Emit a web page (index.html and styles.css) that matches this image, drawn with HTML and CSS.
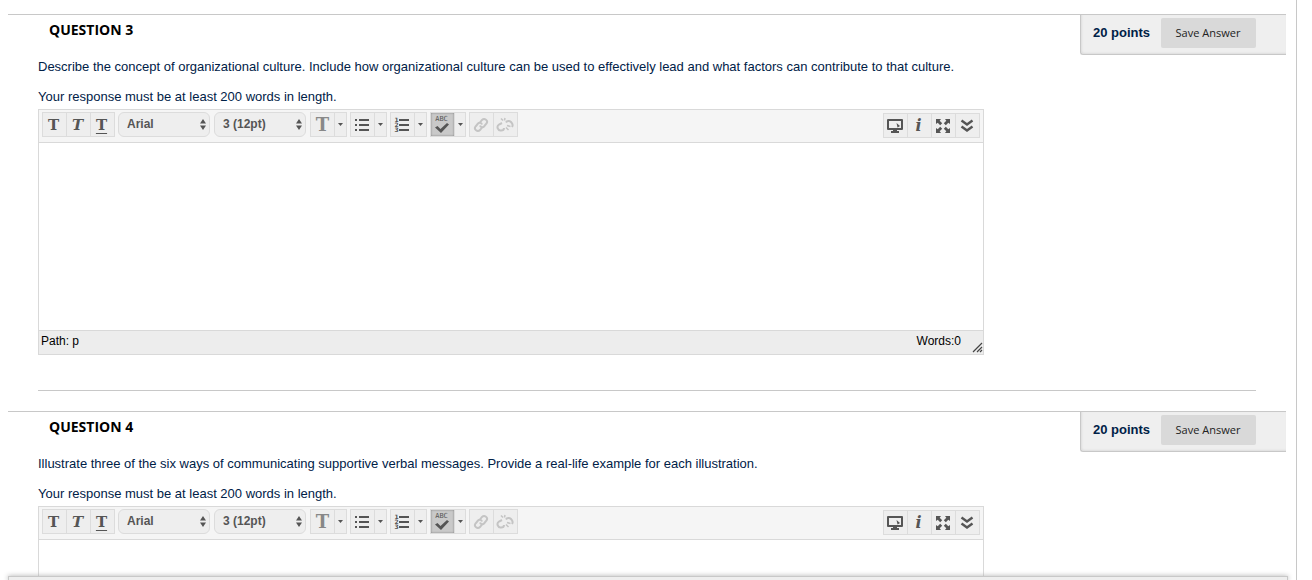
FILE: index.html
```
<!DOCTYPE html>
<html lang="en">
<head>
<meta charset="utf-8">
<title>Take Test</title>
<link rel="stylesheet" href="styles.css">
</head>
<body>
<svg class="defs" aria-hidden="true">
  <symbol id="bullets" viewBox="0 0 16 16"><path d="M1 2h2v2H1zM1 7h2v2H1zM1 12h2v2H1zM5 2h10v2H5zM5 7h10v2H5zM5 12h10v2H5z"/></symbol>
  <symbol id="lines" viewBox="0 0 10 16"><path d="M0 2h10v2H0zM0 7h10v2H0zM0 12h10v2H0z"/></symbol>
  <symbol id="check" viewBox="0 0 16 10"><path d="M1 4.500l2.500-1.500 3 3L13 0l2 1.500L7 10z"/></symbol>
  <symbol id="caret" viewBox="0 0 5 3"><path d="M0 0h5L2.500 3z"/></symbol>
  <symbol id="updown" viewBox="0 0 6 11"><path d="M0 4.500L3 0l3 4.500zM0 6.500h6L3 11z"/></symbol>
  <symbol id="link" viewBox="0 0 16 16"><g fill="none" stroke="currentColor" stroke-width="2"><path d="M7 5.500l2-2.500c2.500-2.500 6.500 .5 4.500 3.500L11 9.500C9.500 11 7.500 10 7 8.500"/><path d="M9 10.500l-2 2.500c-2.500 2.500-6.500-.5-4.500-3.500L5 6.500C6.500 5 8.500 6 9 7.500"/></g></symbol>
  <symbol id="unlink" viewBox="0 0 18 16"><g fill="none" stroke="currentColor" stroke-width="2"><path d="M10 5.500c1-2 3.500-2 5-.5 1.500 1.500 2 3.500 1 5"/><path d="M6 6L3 7.500C0 9.500 2 14 5 13.500c2 0 3-1 3-2.500"/><path d="M5 1.500l2 2M9 1l-.500 2.500M11 8.500l3.500 1M10 10.500l2.500 2.500" stroke-width="1.500"/></g></symbol>
  <symbol id="screen" viewBox="0 0 16 16"><path fill-rule="evenodd" d="M1 1h14q1 0 1 1v9q0 1-1 1H1q-1 0-1-1V2q0-1 1-1zM2 3v7h12V3zM6 12h4v1h2v2H4v-2h2z"/><path d="M9.500 5l3.500 3-1.500 1-1 .5z"/></symbol>
  <symbol id="expand" viewBox="0 0 16 16"><path d="M1 1h5L4.700 2.700l2.500 2.500-2 2-2.500-2.500L1 6zM15 1v5l-1.700-1.300-2.500 2.500-2-2 2.500-2.500L10 1zM1 15v-5l1.700 1.300 2.500-2.500 2 2-2.500 2.500L6 15zM15 15h-5l1.300-1.700-2.500-2.500 2-2 2.500 2.500L15 10z"/></symbol>
  <symbol id="chevrons" viewBox="0 0 14 14"><path fill="none" stroke="currentColor" stroke-width="2.400" d="M1.500 1.500L7 5.500l5.500-4M1.500 7.500L7 11.500l5.500-4"/></symbol>
  <symbol id="grip" viewBox="0 0 12 12"><path fill="none" stroke="currentColor" stroke-width="1.200" d="M2 11l9-9M6 11l5-5M9 11l2-2"/></symbol>
</svg>

<main class="page">
  <section class="question">
    <header class="question-head">
      <h2 class="question-title">QUESTION 3</h2>
      <div class="points-box">
        <span class="points">20 points</span>
        <button class="save" type="button">Save Answer</button>
      </div>
    </header>
    <div class="question-body">
      <p class="prompt">Describe the concept of organizational culture. Include how organizational culture can be used to effectively lead and what factors can contribute to that culture.</p>
      <p class="prompt">Your response must be at least 200 words in length.</p>
      <div class="editor">
        <div class="toolbar">
          <div class="group">
            <button class="tool slab" type="button" aria-label="Bold">T</button>
            <button class="tool slab italic" type="button" aria-label="Italic">T</button>
            <button class="tool slab underline" type="button" aria-label="Underline">T</button>
          </div>
          <div class="picker"><select aria-label="Font family"><option>Arial</option></select><svg class="updown"><use href="#updown"/></svg></div>
          <div class="picker"><select aria-label="Font size"><option>3 (12pt)</option></select><svg class="updown"><use href="#updown"/></svg></div>
          <div class="group split">
            <button class="tool slab large" type="button" aria-label="Text color">T</button>
            <button class="drop" type="button" aria-label="More text colors"><svg class="caret"><use href="#caret"/></svg></button>
          </div>
          <div class="group split">
            <button class="tool" type="button" aria-label="Bullet list"><svg class="icon"><use href="#bullets"/></svg></button>
            <button class="drop" type="button" aria-label="Bullet styles"><svg class="caret"><use href="#caret"/></svg></button>
          </div>
          <div class="group split">
            <button class="tool" type="button" aria-label="Numbered list"><span class="digits"><span>1</span><span>2</span><span>3</span></span><svg class="lines"><use href="#lines"/></svg></button>
            <button class="drop" type="button" aria-label="Number styles"><svg class="caret"><use href="#caret"/></svg></button>
          </div>
          <div class="group split">
            <button class="tool spell" type="button" aria-label="Spell check" aria-pressed="true"><span class="abc">ABC</span><svg class="check"><use href="#check"/></svg></button>
            <button class="drop narrow" type="button" aria-label="Spell check language"><svg class="caret"><use href="#caret"/></svg></button>
          </div>
          <div class="group">
            <button class="tool" type="button" aria-label="Insert link" disabled><svg class="icon"><use href="#link"/></svg></button>
            <button class="tool" type="button" aria-label="Remove link" disabled><svg class="icon wide"><use href="#unlink"/></svg></button>
          </div>
          <div class="group end">
            <button class="tool" type="button" aria-label="Preview"><svg class="icon"><use href="#screen"/></svg></button>
            <button class="tool slab info" type="button" aria-label="Help">i</button>
            <button class="tool" type="button" aria-label="Full screen"><svg class="icon"><use href="#expand"/></svg></button>
            <button class="tool" type="button" aria-label="Show more"><svg class="chevrons"><use href="#chevrons"/></svg></button>
          </div>
        </div>
        <textarea class="answer" aria-label="Answer to question 3"></textarea>
        <div class="status"><span>Path: p</span><span class="words">Words:0</span><svg class="grip"><use href="#grip"/></svg></div>
      </div>
    </div>
  </section>

  <section class="question">
    <header class="question-head">
      <h2 class="question-title">QUESTION 4</h2>
      <div class="points-box">
        <span class="points">20 points</span>
        <button class="save" type="button">Save Answer</button>
      </div>
    </header>
    <div class="question-body">
      <p class="prompt">Illustrate three of the six ways of communicating supportive verbal messages. Provide a real-life example for each illustration.</p>
      <p class="prompt">Your response must be at least 200 words in length.</p>
      <div class="editor">
        <div class="toolbar">
          <div class="group">
            <button class="tool slab" type="button" aria-label="Bold">T</button>
            <button class="tool slab italic" type="button" aria-label="Italic">T</button>
            <button class="tool slab underline" type="button" aria-label="Underline">T</button>
          </div>
          <div class="picker"><select aria-label="Font family"><option>Arial</option></select><svg class="updown"><use href="#updown"/></svg></div>
          <div class="picker"><select aria-label="Font size"><option>3 (12pt)</option></select><svg class="updown"><use href="#updown"/></svg></div>
          <div class="group split">
            <button class="tool slab large" type="button" aria-label="Text color">T</button>
            <button class="drop" type="button" aria-label="More text colors"><svg class="caret"><use href="#caret"/></svg></button>
          </div>
          <div class="group split">
            <button class="tool" type="button" aria-label="Bullet list"><svg class="icon"><use href="#bullets"/></svg></button>
            <button class="drop" type="button" aria-label="Bullet styles"><svg class="caret"><use href="#caret"/></svg></button>
          </div>
          <div class="group split">
            <button class="tool" type="button" aria-label="Numbered list"><span class="digits"><span>1</span><span>2</span><span>3</span></span><svg class="lines"><use href="#lines"/></svg></button>
            <button class="drop" type="button" aria-label="Number styles"><svg class="caret"><use href="#caret"/></svg></button>
          </div>
          <div class="group split">
            <button class="tool spell" type="button" aria-label="Spell check" aria-pressed="true"><span class="abc">ABC</span><svg class="check"><use href="#check"/></svg></button>
            <button class="drop narrow" type="button" aria-label="Spell check language"><svg class="caret"><use href="#caret"/></svg></button>
          </div>
          <div class="group">
            <button class="tool" type="button" aria-label="Insert link" disabled><svg class="icon"><use href="#link"/></svg></button>
            <button class="tool" type="button" aria-label="Remove link" disabled><svg class="icon wide"><use href="#unlink"/></svg></button>
          </div>
          <div class="group end">
            <button class="tool" type="button" aria-label="Preview"><svg class="icon"><use href="#screen"/></svg></button>
            <button class="tool slab info" type="button" aria-label="Help">i</button>
            <button class="tool" type="button" aria-label="Full screen"><svg class="icon"><use href="#expand"/></svg></button>
            <button class="tool" type="button" aria-label="Show more"><svg class="chevrons"><use href="#chevrons"/></svg></button>
          </div>
        </div>
        <textarea class="answer" aria-label="Answer to question 4"></textarea>
      </div>
    </div>
  </section>
</main>
<footer class="submit-bar"></footer>
</body>
</html>
```
FILE: styles.css
```
* { box-sizing: border-box; }
body {
  margin: 0;
  height: 100vh;
  overflow: hidden;
  background: #fff;
  color: #002147;
  font: 13px/15px "Liberation Sans", Arial, sans-serif;
}
.defs { position: absolute; width: 0; height: 0; }
svg { display: block; fill: currentColor; }
button, select, textarea { margin: 0; padding: 0; border: 0; font: inherit; color: inherit; }

.page {
  min-height: 100vh;
  margin-right: 15px;
  padding: 14px 10px 0 8px;
  border-right: 1px solid #c8c8c8;
}
.question { border-top: 1px solid #c8c8c8; }
.question-head { display: flex; justify-content: space-between; align-items: flex-start; }
.question-title {
  margin: 0;
  padding: 5px 0 0 41px;
  color: #000;
  font: bold 14px/20px "Open Sans", sans-serif;
}
.points-box {
  display: flex;
  align-items: flex-start;
  gap: 11px;
  height: 40px;
  padding: 3px 30px 0 12px;
  background: #efefef;
  border: 1px solid #c8c8c8;
  border-width: 0 0 1px 1px;
  border-bottom-left-radius: 3px;
  box-shadow: inset 1px -1px 2px #ddd;
}
.points { font-weight: bold; line-height: 29px; }
.save {
  width: 95px;
  height: 30px;
  padding-right: 1px;
  background: #d9d9d9;
  border-radius: 2px;
  color: #222;
  font: 11px/16px "Open Sans", sans-serif;
}
.question-body { margin: 0 30px 20px; padding: 4px 0 35px; border-bottom: 1px solid #c8c8c8; }
.prompt { margin: 0 0 15px; }
.prompt + .prompt { margin-bottom: 5px; }

.editor { max-width: 946px; border: 1px solid #d9d9d9; }
.toolbar {
  display: flex;
  align-items: flex-start;
  gap: 3px;
  padding: 2px 3px 5px 3px;
  background: #f5f5f5;
  border-bottom: 1px solid #d9d9d9;
  color: #555;
}
.group { display: flex; border: 1px solid #dcdcdc; background: #eee; }
.group > * + * { border-left: 1px solid #dcdcdc; }
.toolbar .end { margin: 1px 0 -1px auto; }
.tool {
  display: flex;
  align-items: center;
  justify-content: center;
  width: 24px;
  height: 23px;
  padding-right: 2px;
  background: none;
}
.group:not(.split) .tool:first-child { width: 23px; }
.split .tool { width: 23px; }
.drop { display: flex; align-items: center; justify-content: center; width: 12px; background: none; }
.narrow { width: 11px; }
.slab { font: bold 15px/18px "DejaVu Serif", serif; }
.italic { font-style: italic; }
.underline { text-decoration: underline; text-underline-offset: 3px; text-decoration-thickness: 1px; }
.large { padding-right: 0; font-size: 18px; color: #888; }
.info { font-style: italic; font-size: 16px; }
.tool:disabled { color: #c4c4c4; }
.icon { flex: none; width: 16px; height: 16px; }
.wide { width: 18px; }
.lines { width: 10px; height: 16px; }
.chevrons { width: 14px; height: 14px; }
.digits { display: grid; width: 5px; font: bold 6px/5px "DejaVu Sans", sans-serif; }
.spell { flex-direction: column; background: #c9c9c9; box-shadow: inset 0 0 2px #777; }
.abc { font: 7px/7px "DejaVu Sans Mono", monospace; }
.check { width: 16px; height: 10px; }
.caret { width: 5px; height: 3px; }
.picker { display: grid; width: 93px; padding-right: 1px; align-items: center; }
.picker > * { grid-area: 1 / 1; }
.picker select {
  appearance: none;
  height: 25px;
  padding: 0 8px;
  background: #eee;
  border: 1px solid #dcdcdc;
  border-radius: 6px;
  font-size: 12px;
  font-weight: bold;
}
.updown { justify-self: end; width: 6px; height: 11px; margin-right: 4px; pointer-events: none; }
.answer { display: block; width: 100%; height: 187px; resize: none; outline: 0; }
.status {
  display: flex;
  height: 24px;
  padding: 3px 0 0 2px;
  background: #ededed;
  border-top: 1px solid #d9d9d9;
  color: #000;
  font-size: 12px;
}
.words { margin-left: auto; }
.grip { align-self: flex-end; width: 12px; height: 12px; margin: 0 0 1px 10px; color: #444; }

.submit-bar {
  position: fixed;
  bottom: 0;
  left: 8px;
  right: 24px;
  height: 4px;
  background: #eee;
  border: 1px solid #c8c8c8;
  border-bottom: 0;
  box-shadow: 0 0 5px #aaa;
}
```
